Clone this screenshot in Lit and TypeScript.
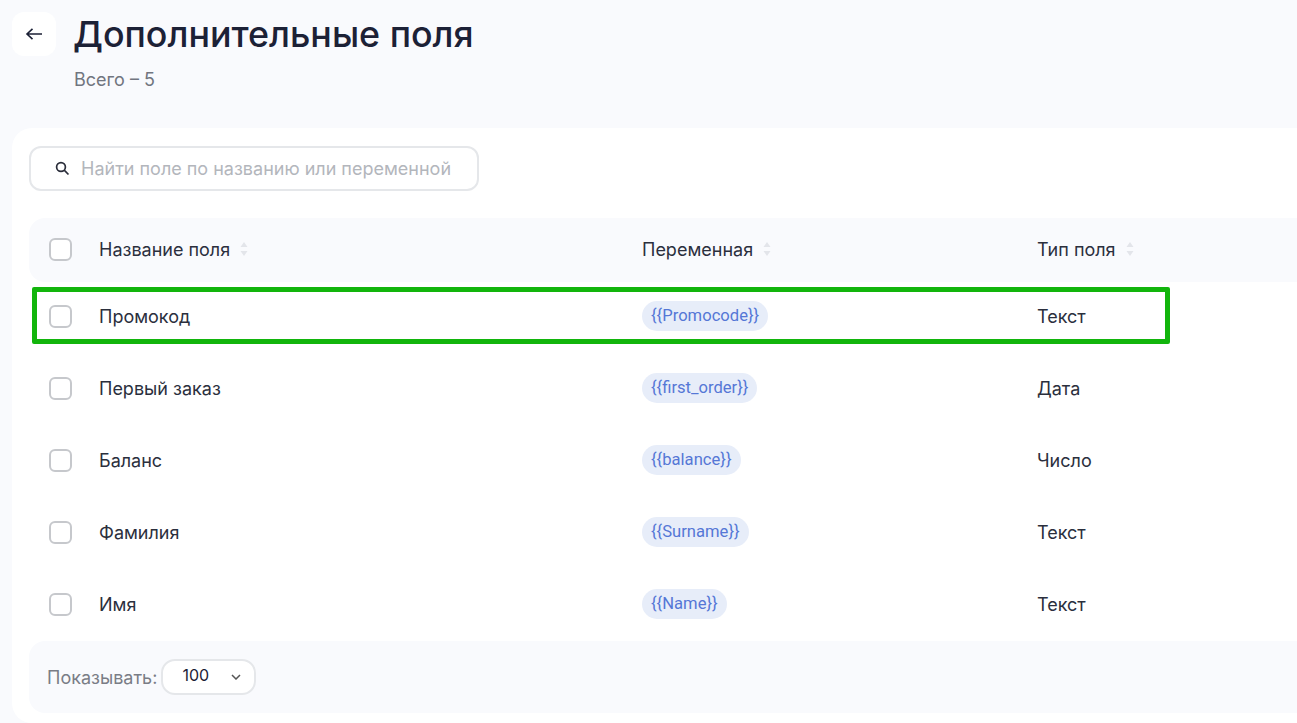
import { LitElement, html, css, svg } from 'lit';
import { customElement } from 'lit/decorators.js';

const rows = [
  { name: 'Промокод', variable: '{{Promocode}}', type: 'Текст' },
  { name: 'Первый заказ', variable: '{{first_order}}', type: 'Дата' },
  { name: 'Баланс', variable: '{{balance}}', type: 'Число' },
  { name: 'Фамилия', variable: '{{Surname}}', type: 'Текст' },
  { name: 'Имя', variable: '{{Name}}', type: 'Текст' },
];

const sortIcon = svg`<svg class="sort" width="8" height="16" viewBox="0 0 8 16"><path d="M4 1 L7.5 6 H.5 Z M4 15 L.5 10 H7.5 Z" fill="#e3e5ea"/></svg>`;

@customElement('app-root')
export class AppRoot extends LitElement {
  static styles = css`
    :host {
      display: block;
      height: 723px;
      overflow: hidden;
      background: #f9fafd;
      font-family: Inter, "Noto Sans", sans-serif;
      color: #2b2f3d;
      position: relative;
    }

    .head {
      display: flex;
      gap: 18px;
      padding: 12px 0 0 12px;
      height: 128px;
      box-sizing: border-box;
    }

    .back {
      width: 44px;
      height: 44px;
      border-radius: 12px;
      background: #fff;
      display: flex;
      align-items: center;
      justify-content: center;
    }

    h1 {
      margin: 0 0 0 -1px;
      font-size: 35.8px;
      font-weight: 500;
      line-height: 44px;
      color: #1c2136;
    }

    .total {
      margin-top: 12px;
      font-size: 18px;
      line-height: 23px;
      color: #71757f;
    }

    .card {
      margin-left: 12px;
      background: #fff;
      border-radius: 20px 0 0 20px;
      padding: 18px 0 11px 17px;
      height: 595px;
      box-sizing: border-box;
      position: relative;
    }

    .search {
      width: 450px;
      height: 45px;
      box-sizing: border-box;
      border: 2px solid #e5e7ea;
      border-radius: 12px;
      display: flex;
      align-items: center;
      gap: 11px;
      padding-left: 24px;
      font-size: 18px;
      color: #b3b6bc;
    }

    .row {
      display: grid;
      grid-template-columns: 50px 543px 395px 1fr;
      align-items: center;
      height: 72px;
      box-sizing: border-box;
      padding: 0 0 2px 20px;
      font-size: 18px;
    }

    .table-head {
      margin-top: 27px;
      height: 64px;
      background: #f9fafd;
      border-radius: 16px 0 0 16px;
    }

    .th {
      display: flex;
      align-items: center;
      gap: 10px;
    }

    .check {
      width: 23px;
      height: 23px;
      box-sizing: border-box;
      border: 2px solid #c6c8cc;
      border-radius: 6px;
      background: #fff;
    }

    .pill {
      display: inline-block;
      padding: 0 9px;
      height: 30px;
      line-height: 30px;
      border-radius: 15px;
      background: #e7edf9;
      color: #5577d6;
      font-family: Roboto, sans-serif;
      font-size: 16.6px;
    }

    .rows {
      margin-top: -1px;
    }

    .foot {
      height: 72px;
      background: #f9fafd;
      border-radius: 16px 0 0 16px;
      display: flex;
      align-items: center;
      gap: 4px;
      padding-left: 18px;
      font-size: 18px;
      color: #7a7d86;
    }

    .select {
      width: 95px;
      height: 36px;
      box-sizing: border-box;
      border: 2px solid #e5e7ea;
      border-radius: 14px;
      background: #fff;
      display: flex;
      align-items: center;
      justify-content: space-between;
      padding: 0 13px 0 19px;
      color: #1c2136;
      font-size: 16px;
    }

    .select span {
      margin-bottom: 4px;
    }

    .highlight {
      position: absolute;
      left: 20px;
      top: 159px;
      width: 1138px;
      height: 57px;
      box-sizing: border-box;
      border: 5px solid #12b50c;
      border-radius: 2px;
      pointer-events: none;
    }
  `;

  render() {
    return html`
      <div class="head">
        <div class="back">
          <svg width="18" height="14" viewBox="0 0 18 14" fill="none" stroke="#1c2136" stroke-width="1.6">
            <path d="M17 7H2M7.5 1.8 2 7l5.5 5.2" />
          </svg>
        </div>
        <div>
          <h1>Дополнительные поля</h1>
          <div class="total">Всего – 5</div>
        </div>
      </div>
      <div class="card">
        <div class="search">
          <svg width="15" height="15" viewBox="0 0 15 15" fill="none" stroke="#2a2d3a" stroke-width="1.7">
            <circle cx="6" cy="6" r="4.4" />
            <path d="M9.2 9.2 13.5 13.5" />
          </svg>
          <span>Найти поле по названию или переменной</span>
        </div>
        <div class="row table-head">
          <div class="check"></div>
          <div class="th">Название поля ${sortIcon}</div>
          <div class="th">Переменная ${sortIcon}</div>
          <div class="th">Тип поля ${sortIcon}</div>
        </div>
        <div class="rows">
          ${rows.map(
            (r) => html`
              <div class="row">
                <div class="check"></div>
                <div>${r.name}</div>
                <div><span class="pill">${r.variable}</span></div>
                <div>${r.type}</div>
              </div>
            `
          )}
        </div>
        <div class="foot">
          <span>Показывать:</span>
          <div class="select">
            <span>100</span>
            <svg width="10" height="6" viewBox="0 0 10 6" fill="none" stroke="#555" stroke-width="1.5">
              <path d="M1 1l4 4 4-4" />
            </svg>
          </div>
        </div>
        <div class="highlight"></div>
      </div>
    `;
  }
}
